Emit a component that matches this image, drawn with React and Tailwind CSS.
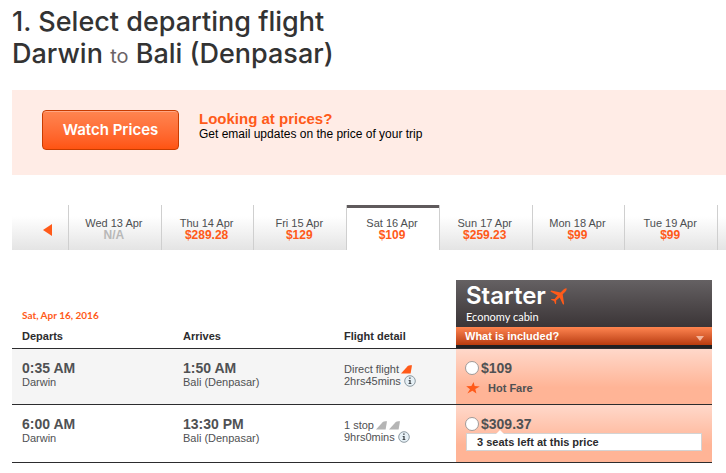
const days = [
  { date: 'Wed 13 Apr', price: null },
  { date: 'Thu 14 Apr', price: '$289.28' },
  { date: 'Fri 15 Apr', price: '$129' },
  { date: 'Sat 16 Apr', price: '$109', active: true },
  { date: 'Sun 17 Apr', price: '$259.23' },
  { date: 'Mon 18 Apr', price: '$99' },
  { date: 'Tue 19 Apr', price: '$99' },
]

const flights = [
  {
    departs: '0:35 AM',
    from: 'Darwin',
    arrives: '1:50 AM',
    to: 'Bali (Denpasar)',
    stops: 'Direct flight',
    tails: ['text-[#ff5a19]'],
    duration: '2hrs45mins',
    price: '$109',
    hotFare: true,
  },
  {
    departs: '6:00 AM',
    from: 'Darwin',
    arrives: '13:30 PM',
    to: 'Bali (Denpasar)',
    stops: '1 stop',
    tails: ['text-[#b5b5b5]', 'text-[#b5b5b5]'],
    duration: '9hrs0mins',
    price: '$309.37',
    seatsLeft: '3 seats left at this price',
  },
]

function TailIcon({ className }) {
  return (
    <svg viewBox="0 0 11 9" className={`h-[9px] w-[11px] ${className}`} fill="currentColor" aria-hidden="true">
      <path d="M0 8.6 L6.6 1.2 C7.4 0.4 8 0.2 11 0.2 L9.6 8.6 Z" />
    </svg>
  )
}

function InfoIcon() {
  return (
    <svg viewBox="0 0 12 12" className="size-3" aria-hidden="true">
      <circle cx="6" cy="6" r="5.3" fill="#e6f0f6" stroke="#8d9aa2" strokeWidth="1" />
      <path d="M5.2 2.6h1.4v1.2H5.2z M4.6 5h2v3.3h.8V9H4.5v-.7h.9V5.7h-.8z" fill="#33383c" />
    </svg>
  )
}

function PlaneIcon() {
  return (
    <svg viewBox="0 0 17 17" className="size-[17px]" fill="#ff5a19" aria-hidden="true">
      <path d="M16.6 0.4 C15.4 0 13.7 1.2 12.4 2.7 L10.6 4.5 L1.2 2.6 L0.4 3.6 L7.6 7.5 L4.6 11.1 L1.6 10.9 L0.9 11.8 L4.1 13 L5.2 16.2 L6.2 15.5 L6.1 12.6 L9.7 9.4 L13.1 16.7 L14.1 15.9 L12.7 6.3 L14.5 4.5 C15.9 3.1 17 1.4 16.6 0.4 Z" />
    </svg>
  )
}

function StarIcon() {
  return (
    <svg viewBox="0 0 14 12" className="h-3 w-[14px]" fill="#ff5a19" aria-hidden="true">
      <path d="M7.6 0 L8.6 4 L13.8 4.4 L9.3 7 L10.4 11.6 L6.4 8.7 L1.4 11.4 L4 7.2 L0.2 4.2 L5.4 4 Z" />
    </svg>
  )
}

function WatchPrices() {
  return (
    <section className="mt-5 flex h-[85px] items-start gap-5 bg-[#ffece6] pt-5 pl-[30px]">
      <button
        type="button"
        className="h-10 w-[137px] shrink-0 rounded-[4px] border border-[#c83c00] bg-linear-to-b from-[#ff8550] to-[#ff5410] font-['Inter',sans-serif] text-[15px] font-semibold text-white shadow-[inset_0_1px_0_#ffa683]"
      >
        Watch Prices
      </button>
      <div className="pt-px">
        <h2 className="text-[15px] leading-4 font-bold text-[#ff5a19]">Looking at prices?</h2>
        <p className="text-[12px] leading-[14px] text-black">Get email updates on the price of your trip</p>
      </div>
    </section>
  )
}

function DateTabs() {
  return (
    <nav className="mt-[30px] flex h-[45px] bg-linear-to-b from-white from-25% to-[#e4e4e4]" aria-label="Departure date">
      <a href="#previous" aria-label="Previous days" className="flex w-14 shrink-0 items-center justify-end pt-1 pr-4">
        <svg viewBox="0 0 9 12" className="h-3 w-[9px]" fill="#ff5a19" aria-hidden="true">
          <path d="M9 0 V12 L0 6 Z" />
        </svg>
      </a>
      {days.map((day) => (
        <a
          key={day.date}
          href="#day"
          className={`flex flex-1 flex-col justify-end border-l border-[#cfcfcf] pr-[2px] pb-[9px] text-center ${
            day.active ? 'bg-white shadow-[inset_0_3px_0_#5f5a5c]' : ''
          }`}
        >
          <span className="text-[11px] leading-3 whitespace-nowrap text-[#4d4f51]">{day.date}</span>
          {day.price ? (
            <span className="text-[12px] leading-3 font-bold text-[#ff5a19]">{day.price}</span>
          ) : (
            <span className="text-[12px] leading-3 font-bold text-[#b8b8b8]">N/A</span>
          )}
        </a>
      ))}
      <span className="w-[9px] shrink-0 border-l border-[#cfcfcf]" />
    </nav>
  )
}

function FareHeader() {
  return (
    <div className="bg-[#222022] pb-[3px] text-white">
      <div className="h-[47px] bg-linear-to-b from-[#656163] to-[#3b3537] pt-px pl-[10px]">
        <div className="flex items-center gap-1 font-['Inter',sans-serif]">
          <span className="text-[24px] leading-[30px] font-semibold">Starter</span>
          <PlaneIcon />
        </div>
        <div className="font-['Lato',sans-serif] text-[11px] leading-3 font-normal">Economy cabin</div>
      </div>
      <button
        type="button"
        className="flex h-[18px] w-full items-center justify-between bg-linear-to-b from-[#ff8550] to-[#b83b0c] pr-2 pl-[9px] text-[11px] font-bold"
      >
        What is included?
        <svg viewBox="0 0 8 5" className="mt-1 h-[5px] w-2" fill="#f3b49b" aria-hidden="true">
          <path d="M0 0 H8 L4 5 Z" />
        </svg>
      </button>
    </div>
  )
}

function FareCell({ flight }) {
  return (
    <>
      <label className="flex h-4 items-center gap-[2px] text-[14px] font-bold">
        <input
          type="radio"
          name="fare"
          className="size-[14px] appearance-none rounded-full border border-[#a09a98] bg-white"
        />
        {flight.price}
      </label>
      {flight.hotFare && (
        <div className="mt-[6px] flex items-center gap-2 pl-px text-[11px] leading-3 font-bold">
          <StarIcon />
          Hot Fare
        </div>
      )}
      {flight.seatsLeft && (
        <div className="relative mt-px ml-px border border-[#d3d3d3] bg-white pl-[10px] text-[11px] leading-4 font-bold text-[#2c2c2e]">
          <svg viewBox="0 0 8 4" className="absolute -top-1 left-[29px] h-1 w-2" fill="#fff" aria-hidden="true">
            <path d="M4 0 L8 4 H0 Z" />
          </svg>
          {flight.seatsLeft}
        </div>
      )}
    </>
  )
}

function FlightTable() {
  return (
    <table className="mt-[30px] w-full table-fixed border-separate border-spacing-0 text-left text-[#4f5153]">
      <colgroup>
        <col className="w-[23%]" />
        <col className="w-[23%]" />
        <col />
        <col className="w-[256px]" />
      </colgroup>
      <thead>
        <tr className="align-bottom text-[11px] leading-3 text-[#2c2c2e]">
          <th className="border-b border-[#2c2c2e] pb-[6px] pl-[10px]">
            <div className="mb-[9px] font-['Lato',sans-serif] text-[10px] font-bold text-[#ff5a19]">
              Sat, Apr 16, 2016
            </div>
            Departs
          </th>
          <th className="border-b border-[#2c2c2e] pb-[6px] pl-[10px]">Arrives</th>
          <th className="border-b border-[#2c2c2e] pb-[6px] pl-[10px]">Flight detail</th>
          <th className="border-b border-[#2c2c2e] p-0">
            <FareHeader />
          </th>
        </tr>
      </thead>
      <tbody>
        {flights.map((flight, index) => (
          <tr
            key={index}
            className={`align-top text-[11px] leading-3 ${index % 2 === 0 ? 'h-14 bg-[#f5f5f5]' : 'h-[58px] bg-white'}`}
          >
            <td className="border-b border-[#2c2c2e] pt-[11px] pl-[10px]">
              <div className="text-[14px] leading-4 font-bold">{flight.departs}</div>
              {flight.from}
            </td>
            <td className="border-b border-[#2c2c2e] pt-[11px] pl-[10px]">
              <div className="text-[14px] leading-4 font-bold">{flight.arrives}</div>
              {flight.to}
            </td>
            <td className="border-b border-[#2c2c2e] pt-[14px] pl-[10px] whitespace-nowrap">
              <div className="flex h-3 items-center gap-[2px]">
                {flight.stops}
                {flight.tails.map((color, i) => (
                  <TailIcon key={i} className={color} />
                ))}
              </div>
              <div className="flex h-3 items-center gap-[3px]">
                {flight.duration}
                <button type="button" aria-label="Flight information">
                  <InfoIcon />
                </button>
              </div>
            </td>
            <td className="border-b border-[#2c2c2e] bg-linear-to-b from-[#ffd8ca] to-[#ffb496] to-70% pt-[11px] pr-[10px] pl-[9px]">
              <FareCell flight={flight} />
            </td>
          </tr>
        ))}
      </tbody>
    </table>
  )
}

export default function App() {
  return (
    <main className="overflow-hidden bg-white pt-[6px] pb-[10px] pl-3 font-['Liberation_Sans',Arial,sans-serif]">
      <h1 className="font-['Inter',sans-serif] text-[27px] leading-8 font-medium text-[#333]">
        1. Select departing flight
        <br />
        Darwin <span className="text-[20px] leading-5 font-normal text-[#6b6366]">to</span> Bali (Denpasar)
      </h1>
      <WatchPrices />
      <DateTabs />
      <div className="pr-[14px]">
        <FlightTable />
      </div>
    </main>
  )
}
